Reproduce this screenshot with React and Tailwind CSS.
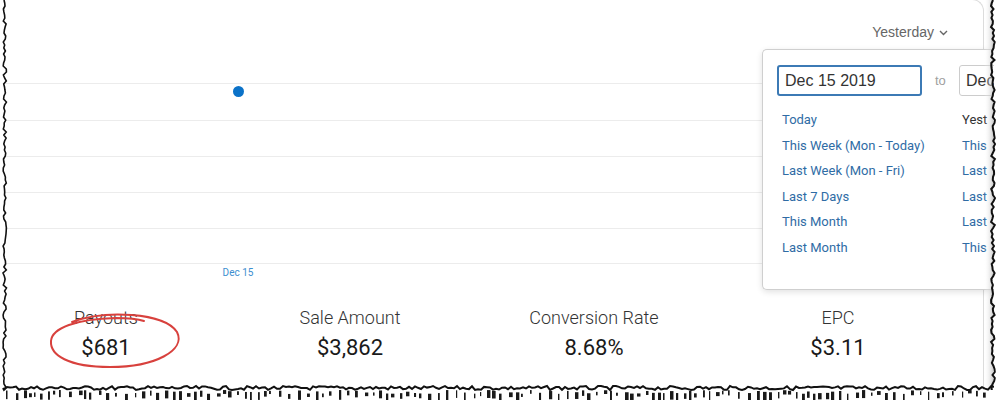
import React from "react";

function rng(seed) {
  let s = seed;
  return () => {
    s = (s * 9301 + 49297) % 233280;
    return s / 233280;
  };
}

function TornEdges() {
  const r = rng(7);
  let left = "M4 0";
  for (let y = 3; y <= 392; y += 3) left += ` L${(3 + r() * 3.5).toFixed(1)} ${y}`;
  let right = "M993 0";
  for (let y = 3; y <= 400; y += 3) right += ` L${(991 + r() * 4).toFixed(1)} ${y}`;
  let bottom = "M3 388";
  for (let x = 4; x <= 994; x += 3) bottom += ` L${x} ${(386 + r() * 4).toFixed(1)}`;
  const ticks = [];
  for (let x = 6; x < 990; x += 5 + Math.floor(r() * 6)) {
    const h = 3 + r() * 7;
    ticks.push(
      <rect key={x} x={x} y={390 + r() * 4} width={1.2 + r() * 2.5} height={h} fill="#1a1a1a" />
    );
  }
  return (
    <svg className="absolute inset-0 pointer-events-none" width="1000" height="400" viewBox="0 0 1000 400">
      <defs>
        <linearGradient id="sh" x1="0" x2="1">
          <stop offset="0" stopColor="#ffffff" stopOpacity="0" />
          <stop offset="1" stopColor="#bdbdbd" stopOpacity="0.7" />
        </linearGradient>
      </defs>
      <rect x="984" y="0" width="9" height="400" fill="url(#sh)" />
      <rect x="994" y="0" width="6" height="400" fill="#fff" />
      <path d={left} stroke="#111" strokeWidth="1.6" fill="none" />
      <path d={right} stroke="#111" strokeWidth="2" fill="none" />
      <rect x="0" y="390" width="1000" height="10" fill="#fff" />
      <path d={bottom} stroke="#111" strokeWidth="2" fill="none" />
      {ticks}
    </svg>
  );
}

export default function App() {
  const links1 = ["Today", "This Week (Mon - Today)", "Last Week (Mon - Fri)", "Last 7 Days", "This Month", "Last Month"];
  const links2 = ["Yest", "This", "Last", "Last", "Last", "This"];
  const stats = [
    ["Payouts", "$681"],
    ["Sale Amount", "$3,862"],
    ["Conversion Rate", "8.68%"],
    ["EPC", "$3.11"],
  ];
  return (
    <div className="relative w-[1000px] h-[400px] overflow-hidden bg-white font-['Roboto',sans-serif]">
      <div className="w-[984px] h-[392px] -mt-px border-t border-r border-[#dcdcdc] rounded-tr-[12px]">
        <div className="h-[64px] flex items-center justify-end pr-[35px] text-[14px] text-[#666] font-['Liberation_Sans',sans-serif]">
          <span>Yesterday</span>
          <svg className="ml-[5px] mt-[2px]" width="9" height="6" viewBox="0 0 9 6">
            <path d="M1 1 L4.5 4.5 L8 1" stroke="#666" strokeWidth="1.4" fill="none" />
          </svg>
        </div>
        <div className="relative pt-[19px] pl-[5px]">
          <div className="border-t border-b border-[#ececec]">
            <div className="h-[36px]" />
            <div className="h-[36px] border-t border-[#ececec]" />
            <div className="h-[36px] border-t border-[#ececec]" />
            <div className="h-[36px] border-t border-[#ececec]" />
            <div className="h-[35px] border-t border-[#ececec]" />
          </div>
          <div className="absolute left-[233px] top-[22px] w-[11px] h-[11px] rounded-full bg-[#0b72c8]" />
        </div>
        <div className="h-[18px] ml-[213px] w-[50px] text-center text-[10px] leading-[18px] text-[#3d8fd0]">Dec 15</div>
        <div className="mt-[24px] -ml-[16px] grid grid-cols-[repeat(4,244px)] text-center">
          {stats.map(([l, v]) => (
            <div key={l}>
              <div className="h-[24px] leading-[24px] text-[18px] font-light text-[#333]">{l}</div>
              <div className="mt-[3px] h-[30px] leading-[30px] text-[22px] text-[#1a1a1a]">{v}</div>
            </div>
          ))}
        </div>
      </div>

      <svg className="absolute left-[46px] top-[310px] pointer-events-none" width="140" height="64" viewBox="0 0 140 64">
        <path
          d="M26 12 C58 0 118 2 131 22 C140 40 110 57 64 57 C22 57 4 45 5 31 C6 18 30 9 70 8 C84 8 92 9 98 11"
          stroke="#d8413d"
          strokeWidth="2"
          fill="none"
          strokeLinecap="round"
        />
      </svg>

      <div className="absolute left-[762px] top-[49px] w-[232px] h-[241px] bg-white border border-r-0 border-[#cfcfcf] rounded-l-[5px] shadow-[0_2px_6px_rgba(0,0,0,0.12)] pt-[15px] pl-[14px] overflow-hidden">
        <div className="flex items-center">
          <div className="shrink-0 w-[145px] h-[31px] border-2 border-[#3c7ab5] rounded-[3px] pl-[6px] flex items-center text-[16px] text-[#333] font-['Liberation_Sans',sans-serif]">
            Dec 15 2019
          </div>
          <div className="shrink-0 ml-[13px] w-[12px] text-[13px] text-[#a0a0a0] font-['Liberation_Sans',sans-serif]">to</div>
          <div className="shrink-0 ml-[12px] w-[60px] h-[31px] border border-[#cccccc] rounded-[3px] pl-[6px] flex items-center text-[16px] text-[#333] font-['Liberation_Sans',sans-serif]">
            Dec
          </div>
        </div>
        <div className="mt-[11px] flex text-[13px] text-[#2f6ca5]">
          <div className="shrink-0 w-[185px] pl-[5px]">
            {links1.map((t) => (
              <div key={t} className="h-[25.6px] leading-[25.6px] whitespace-nowrap">{t}</div>
            ))}
          </div>
          <div className="shrink-0 whitespace-nowrap">
            {links2.map((t, i) => (
              <div key={i} className={"h-[25.6px] leading-[25.6px] " + (i === 0 ? "text-[#333]" : "")}>{t}</div>
            ))}
          </div>
        </div>
      </div>

      <TornEdges />
    </div>
  );
}
